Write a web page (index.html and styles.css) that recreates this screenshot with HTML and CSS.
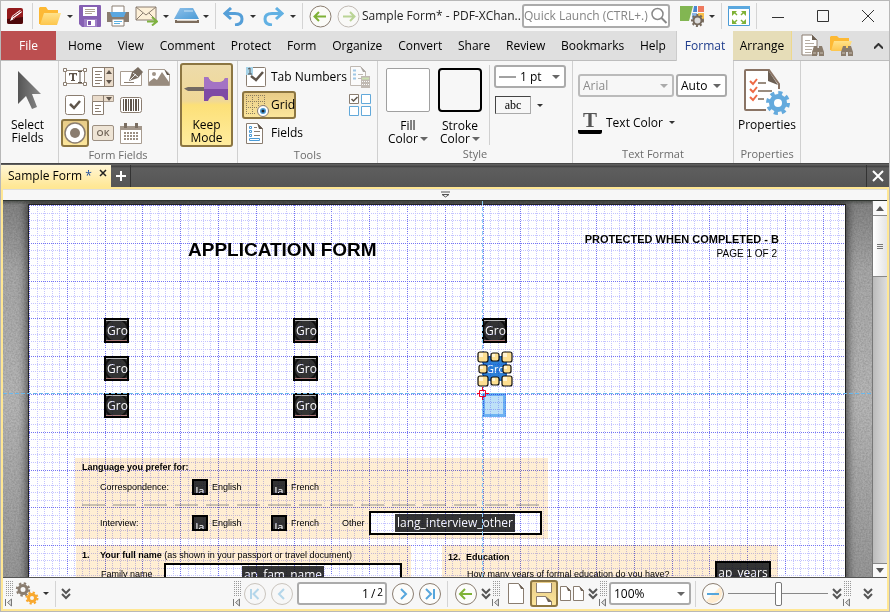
FILE: index.html
```html
<!DOCTYPE html>
<html lang="en">
<head>
<meta charset="utf-8">
<title>Sample Form* - PDF-XChange Editor</title>
<link rel="stylesheet" href="styles.css">
</head>
<body>
<svg class="defs" aria-hidden="true">
  <defs>
    <linearGradient id="gFolder" x1="0" y1="0" x2="0" y2="1"><stop offset="0" stop-color="#ffe28a"/><stop offset="1" stop-color="#fdc64d"/></linearGradient>
    <linearGradient id="gBlue" x1="0" y1="0" x2="1" y2="1"><stop offset="0" stop-color="#8fc1ea"/><stop offset="1" stop-color="#4b9bd6"/></linearGradient>
    <linearGradient id="gGrey" x1="0" y1="0" x2="1" y2="0"><stop offset="0" stop-color="#555"/><stop offset="1" stop-color="#8a8a8a"/></linearGradient>
    <symbol id="binoc" viewBox="0 0 12 11"><path d="M2 1h3v2h2V1h3l2 6v4H7V7H5v4H0V7z" fill="#8a7c6c"/><path d="M1 8h3M8 8h3" stroke="#c9c0b4"/></symbol>
    <symbol id="chev2" viewBox="0 0 10 12"><path d="M1 1l4 4 4-4M1 6l4 4 4-4" fill="none" stroke="#555" stroke-width="2"/></symbol>
    <symbol id="grip" viewBox="0 0 8 26"><path d="M1 .5h7M1 2.500h7M1 4.500h7M1 6.500h7M1 8.500h7M1 10.500h7M1 12.500h7M1 14.500h7" stroke="#999" stroke-dasharray="1 1"/><path d="M.5 18v7M6.500 18v7L2.500 21.500z" stroke="#777" fill="#ddd"/></symbol>
    <g id="gridV">
      <path stroke="#c4c4ff" d="M8.500 0v378M15.500 0v378M23.500 0v378M30.500 0v378M45.500 0v378M53.500 0v378M60.500 0v378M68.500 0v378M83.500 0v378M91.500 0v378M98.500 0v378M106.500 0v378M121.500 0v378M129.500 0v378M136.500 0v378M144.500 0v378M159.500 0v378M166.500 0v378M174.500 0v378M181.500 0v378"/>
      <path stroke="#7474f2" d="M.5 0v378M38.500 0v378M76.500 0v378M113.500 0v378M151.500 0v378"/>
    </g>
    <g id="gridH">
      <path stroke="#c4c4ff" d="M0 8.500h378M0 15.500h378M0 23.500h378M0 30.500h378M0 45.500h378M0 53.500h378M0 60.500h378M0 68.500h378M0 83.500h378M0 91.500h378M0 98.500h378M0 106.500h378M0 121.500h378M0 129.500h378M0 136.500h378M0 144.500h378M0 159.500h378M0 166.500h378M0 174.500h378M0 181.500h378"/>
      <path stroke="#7474f2" d="M0 .5h378M0 38.500h378M0 76.500h378M0 113.500h378M0 151.500h378"/>
    </g>
    <pattern id="grid" width="378" height="378" patternUnits="userSpaceOnUse">
      <g shape-rendering="crispEdges" fill="none" stroke-dasharray="1 1">
        <use href="#gridV"/><use href="#gridV" x="189"/><use href="#gridH"/><use href="#gridH" y="189"/>
      </g>
    </pattern>
    <filter id="noise"><feTurbulence type="fractalNoise" baseFrequency=".6" numOctaves="2" seed="3"/><feColorMatrix values="0 0 0 0 0  0 0 0 0 0  0 0 0 0 0  1 0 0 0 -.3"/></filter>
  </defs>
</svg>
<div class="window">
  <header class="titlebar">
    <button class="logo" aria-label="Application menu"><svg width="16" height="16" viewBox="0 0 16 16"><rect width="16" height="16" rx="2" fill="#931a1c"/><path d="M0 11l16-2v5a2 2 0 0 1-2 2H2a2 2 0 0 1-2-2z" fill="#4d080a"/><path d="M3 13l2-5 8-6 2 2-8 7z" fill="#fff"/><path d="M5.500 9L14 3M6 11l9-6" stroke="#931a1c"/></svg></button>
    <i class="sep"></i>
    <button class="slot" aria-label="Open"><svg width="24" height="20" viewBox="0 0 24 20"><path d="M1 18V2l1-1h6l2 3h10v6L4 18z" fill="#fdb934"/><path d="M6 7h17l-4 12H2z" fill="url(#gFolder)"/></svg></button><button class="dd" aria-label="Open options"></button>
    <button class="slot" aria-label="Save"><svg width="22" height="22" viewBox="0 0 22 22"><path d="M1 0h20a1 1 0 0 1 1 1v20a1 1 0 0 1-1 1H3l-3-3V1a1 1 0 0 1 1-1z" fill="#8660b3"/><path d="M4 2h14v9H4z" fill="#fff"/><path d="M6 4.500h10M6 6.500h10M6 8.500h7" stroke="#b0a494"/><path d="M5 14h13v8H5z" fill="#9f7fc6"/><path d="M8 15h8v6H8z" fill="#fff"/><path d="M9 16h3v4H9z" fill="#7a52a8"/></svg></button>
    <button class="slot" aria-label="Print"><svg width="22" height="22" viewBox="0 0 22 22"><path d="M5 1h12v8H5z" fill="#fff" stroke="#8a7f73"/><path d="M0 7h22v10H0z" fill="#8a7d70"/><path d="M3 7h16l-2 5H5z" fill="#5aa7e0"/><path d="M5 14h12v7H5z" fill="#fff" stroke="#8a7f73"/><path d="M7 16.500h8M7 18.500h6" stroke="#5bb0e0"/></svg></button>
    <button class="slot" aria-label="Email"><svg width="23" height="20" viewBox="0 0 23 20"><path d="M1 1h20v13H1z" fill="#fdf0d8" stroke="#8a7d70"/><path d="M1 1l10 8L21 1M1 14l7-7M21 14l-7-7" fill="none" stroke="#8a7d70"/><path d="M12 15.500h9M17 11l5 4.500-5 4" fill="none" stroke="#7fb241" stroke-width="2"/></svg></button><button class="dd" aria-label="Email options"></button>
    <button class="slot" aria-label="Scan"><svg width="25" height="16" viewBox="0 0 25 16"><path d="M6 0h13l6 11H0z" fill="url(#gBlue)"/><path d="M10 3h9" stroke="#cbe4f6"/><path d="M1 12h24v3H1z" fill="#7c6c5c"/><path d="M3 12h20v1H3z" fill="#d8d2ca"/></svg></button><button class="dd" aria-label="Scan options"></button>
    <i class="sep"></i>
    <button class="slot" aria-label="Undo"><svg width="21" height="19" viewBox="0 0 21 19"><path d="M8 1L2 6.500 8 12M2 6.500h10q7 0 7 5.500t-7 6" fill="none" stroke="#559fd8" stroke-width="3"/></svg></button><button class="dd" aria-label="Undo list"></button>
    <button class="slot" aria-label="Redo"><svg width="21" height="19" viewBox="0 0 21 19"><path d="M13 1l6 5.500L13 12M19 6.500H9q-7 0-7 5.500t7 6" fill="none" stroke="#62b1e3" stroke-width="3"/></svg></button><button class="dd" aria-label="Redo list"></button>
    <i class="sep"></i>
    <button class="slot" aria-label="Previous view"><svg width="23" height="23" viewBox="0 0 23 23"><circle cx="11.500" cy="11.500" r="10.500" fill="#fbfbf8" stroke="#8a7d70"/><path d="M10 7l-4.500 4.500L10 16M5.500 11.500H17" fill="none" stroke="#7fb236" stroke-width="2"/></svg></button>
    <button class="slot faded" aria-label="Next view"><svg width="23" height="23" viewBox="0 0 23 23"><circle cx="11.500" cy="11.500" r="10.500" fill="#fbfbf8" stroke="#8a7d70"/><path d="M13 7l4.500 4.500L13 16M17.500 11.500H6" fill="none" stroke="#7fb236" stroke-width="2"/></svg></button>
    <h1 class="title">Sample Form* - PDF-XChan..</h1>
    <div class="search"><input type="text" aria-label="Quick Launch" placeholder="Quick Launch (CTRL+.)"><svg width="18" height="18" viewBox="0 0 18 18"><circle cx="7.500" cy="7" r="5.500" fill="none" stroke="#888" stroke-width="1.500"/><path d="M11.500 11l5 5" stroke="#888" stroke-width="2"/></svg></div>
    <button class="slot" aria-label="UI options"><svg width="24" height="22" viewBox="0 0 24 22"><path d="M0 1h13L9 16H0z" fill="#82b652"/><path d="M14 1h3v6h-4z" fill="#4a86cf"/><path d="M18 1h6v6h-6z" fill="#ef7a5f"/><path d="M12 8h5v6h-5z" fill="#8bb6e6"/><path d="M18 8h6v6h-6z" fill="#f9c04a"/><circle cx="17.500" cy="15.500" r="4" fill="#ddd" stroke="#766a5d" stroke-width="2"/><circle cx="17.500" cy="15.500" r="5.500" fill="none" stroke="#766a5d" stroke-width="2" stroke-dasharray="2 2"/></svg></button><button class="dd" aria-label="UI options list"></button>
    <i class="sep"></i>
    <button class="slot" aria-label="Full screen"><svg width="22" height="20" viewBox="0 0 22 20"><path d="M.5.5h21v19H.5z" fill="#fff" stroke="#4b9bd6"/><path d="M0 0h22v3H0z" fill="#5ba8df"/><path d="M4 5h5L7.500 6.500l2 2-1 1-2-2L4 10zM18 5h-5l1.500 1.500-2 2 1 1 2-2L18 10zM4 18h5l-1.500-1.500 2-2-1-1-2 2L4 13zM18 18h-5l1.500-1.500-2-2 1-1 2 2L18 13z" fill="#7fb236"/></svg></button>
    <i class="sep"></i>
    <div class="window-buttons">
      <button aria-label="Minimize"><svg width="12" height="12"><path d="M0 7.500h12" stroke="#333"/></svg></button>
      <button aria-label="Maximize"><svg width="12" height="12"><path d="M.5.5h11v11H.5z" fill="none" stroke="#333"/></svg></button>
      <button aria-label="Close"><svg width="12" height="12"><path d="M0 0l12 12M12 0L0 12" stroke="#333"/></svg></button>
    </div>
  </header>

  <nav class="menu">
    <a class="file" href="#file">File</a>
    <div class="menu-items">
      <a href="#home">Home</a><a href="#view">View</a><a href="#comment">Comment</a><a href="#protect">Protect</a><a href="#form">Form</a><a href="#organize">Organize</a><a href="#convert">Convert</a><a href="#share">Share</a><a href="#review">Review</a><a href="#bookmarks">Bookmarks</a><a href="#help">Help</a>
    </div>
    <a class="tab-format" href="#format">Format</a>
    <a class="tab-arrange" href="#arrange">Arrange</a>
    <div class="menu-tools">
      <button aria-label="Find"><svg width="23" height="23" viewBox="0 0 23 23"><path d="M1 1h10l5 5v15H1z" fill="#fff" stroke="#8a7d70"/><path d="M11 1v5h5z" fill="#6c6054"/><path d="M4 6.500h5M4 9.500h9M4 12.500h9M4 15.500h7M4 18.500h6" stroke="#b6ada2"/><use href="#binoc" x="11" y="11" width="12" height="11"/></svg></button>
      <button aria-label="Search folders"><svg width="24" height="23" viewBox="0 0 24 23"><path d="M1 16V3l1-1h6l2 2h10v5L4 17z" fill="#fdb934"/><path d="M5 7h18l-4 10H2z" fill="url(#gFolder)"/><use href="#binoc" x="12" y="11" width="12" height="11"/></svg></button>
      <button class="collapse" aria-label="Collapse ribbon"><svg width="9" height="6"><path d="M0 5.500l4.500-4.500L9 5.500" fill="none" stroke="#333" stroke-width="2"/></svg></button>
    </div>
  </nav>

  <section class="ribbon">
    <div class="group g-select">
      <button class="big"><svg width="28" height="42" viewBox="0 0 28 42"><path d="M4 2l23 23-9 0 5 13-5 2-6-13-8 8z" fill="url(#gGrey)"/></svg><span>Select<br>Fields</span></button>
    </div>
    <div class="group g-fields">
      <div class="field-grid">
        <button aria-label="Text field"><svg width="24" height="18" viewBox="0 0 24 18"><path d="M2.500 2.500h19v13h-19z" fill="#fff" stroke="#9c8f82"/><g fill="#fff" stroke="#8a7d70"><path d="M.5.5h3v3h-3zM20.500.5h3v3h-3zM.5 14.500h3v3h-3zM20.500 14.500h3v3h-3z"/></g><path d="M6 5h8v2.500h-1V6.200h-2V12h1v1H8v-1h1V6.200H7v1.300H6z" fill="#5f554b"/><path d="M15 3.500h4M17 3.500v11M15 14.500h4" stroke="#5f554b"/></svg></button>
        <button aria-label="List box"><svg width="22" height="20" viewBox="0 0 22 20"><path d="M.5.5h21v19H.5z" fill="#fff" stroke="#8a7d70"/><path d="M13 1h8v18h-8z" fill="#eadccb"/><path d="M12.500 0v20" stroke="#8a7d70"/><path d="M3 4.500h7M3 7.500h5M3 10.500h7M3 13.500h7M3 16.500h5" stroke="#8a7d70"/><path d="M14 7l3-4 3 4zM14 13l3 4 3-4z" fill="#5f554b"/></svg></button>
        <button aria-label="Signature field"><svg width="23" height="20" viewBox="0 0 23 20"><path d="M.5 4.500h21v14H.5z" fill="#fff" stroke="#a89c90"/><path d="M4 15.500h10" stroke="#8a7d70"/><path d="M9 14l3-9 6-5 5 5-5 6z" fill="#786c60"/><path d="M13 6l5 4M10 13l6-6" stroke="#eee"/></svg></button>
        <button aria-label="Image field"><svg width="22" height="17" viewBox="0 0 22 17"><path d="M.5.500h16L21.500 5v11.500H.5z" fill="#fff" stroke="#a89c90"/><circle cx="6" cy="5" r="2" fill="#a09488"/><path d="M1 16v-3l5-4 3 2 5-8 7 10v3z" fill="#988b7e"/><path d="M16 0l6 6h-3z" fill="#5f554b"/></svg></button>
        <button aria-label="Check box field"><svg width="20" height="20" viewBox="0 0 20 20"><rect x=".5" y=".5" width="19" height="19" rx="2" fill="#fff" stroke="#8a7d70"/><path d="M5 9l4 4 6-7" fill="none" stroke="#5f554b" stroke-width="2.500"/></svg></button>
        <button aria-label="Drop-down field"><svg width="22" height="20" viewBox="0 0 22 20"><path d="M.5.5h21v6H.5z" fill="#eadccb" stroke="#a89c90"/><path d="M.5 6.500h11v13H.5z" fill="#fff" stroke="#8a7d70"/><path d="M11.500 0v7" stroke="#8a7d70"/><path d="M14 2h6l-3 4z" fill="#5f554b"/><path d="M3 10.500h6M3 13.500h4M3 16.500h6" stroke="#8a7d70"/></svg></button>
        <button aria-label="Barcode field"><svg width="22" height="16" viewBox="0 0 22 16"><rect x=".5" y=".5" width="21" height="15" rx="2" fill="#fff" stroke="#8a7d70"/><path d="M3 2h1v12H3zM5 2h2v12H5zM8 2h1v12H8zM10 2h2v12h-2zM13 2h1v12h-1zM15 2h2v12h-2zM18 2h1v12h-1z" fill="#5f554b"/></svg></button>
        <i></i>
        <button class="active" aria-label="Radio button field"><svg width="22" height="22" viewBox="0 0 22 22"><circle cx="11" cy="11" r="10" fill="#fff" stroke="#8a7d70" stroke-width="1.500"/><circle cx="11" cy="11" r="5" fill="#8a7d70"/></svg></button>
        <button class="okay" aria-label="OK button field">OK</button>
        <button aria-label="Date field"><svg width="22" height="21" viewBox="0 0 22 21"><path d="M.5 3.500h21v17H.5z" fill="#fff" stroke="#a89c90"/><path d="M0 3h22v4H0z" fill="#a3978b"/><path d="M4 0h3v5H4zM15 0h3v5h-3z" fill="#7a6d61"/><path d="M4 10h14M4 13h14M4 16h14" stroke="#9b8f83" stroke-width="2" stroke-dasharray="2 1"/></svg></button>
      </div>
      <h2>Form Fields</h2>
    </div>
    <div class="group g-keep">
      <button class="big keep"><svg width="46" height="26" viewBox="0 0 46 26"><path d="M0 12.500l4-1.500h18v4H4z" fill="#736a62"/><path d="M20 1h4q2 5 6 5h6q4 0 5-4h3v22h-3q-1-4-5-4h-6q-4 0-6 5h-4z" fill="#7f4aa5"/><path d="M20 1h4q2 5 6 5h6q4 0 5-4h3v11H20z" fill="#a473c4"/></svg><span>Keep<br>Mode</span></button>
    </div>
    <div class="group g-tools">
      <div class="tools-body">
        <button class="tool"><svg width="20" height="20" viewBox="0 0 20 20"><rect x=".5" y=".5" width="19" height="19" rx="1" fill="#fff" stroke="#8a7d70"/><path d="M0 0h7v8H0z" fill="#a6d3e8"/><path d="M2 2l2-1v6M2 7h4" fill="none" stroke="#555"/><path d="M5 9l5 4 7-8" fill="none" stroke="#5f554b" stroke-width="2.500"/></svg>Tab Numbers</button>
        <button class="mini faded" aria-label="Calculation order"><svg width="20" height="22" viewBox="0 0 20 22"><path d="M.500.500h10l5 5v14H.5z" fill="#fff" stroke="#8a7d70"/><path d="M10 0l6 6h-3z" fill="#5f554b"/><path d="M3 4.500h3M3 8.500h3M3 12.500h3" stroke="#4b9bd6" stroke-width="2"/><path d="M8 8.500h5M8 12.500h4" stroke="#8a7d70"/><path d="M11 10h9v12h-9z" fill="#8a7d70"/><path d="M12 12.500h7" stroke="#9ec96a" stroke-width="2"/><path d="M12 15.500h7M12 18.500h7" stroke="#fff" stroke-dasharray="1 1"/></svg></button>
        <button class="tool active"><svg width="26" height="23" viewBox="0 0 26 23"><path d="M1 1.500h20M1 7.500h20M1 13.500h12M1 19.500h9M1.500 1v19M7.500 1v19M13.500 1v12M19.500 1v12" stroke="#8a7d60" stroke-dasharray="1 1"/><circle cx="18" cy="17" r="5.500" fill="#fff" stroke="#8a7d70"/><circle cx="18" cy="17" r="3" fill="#4b9bd6"/><circle cx="18" cy="17" r="1.500" fill="#222"/></svg>Grid</button>
        <button class="mini" aria-label="Highlight fields"><svg width="22" height="22" viewBox="0 0 22 22"><path d="M.5.5h9v9h-9z" fill="#fff" stroke="#8a7d70"/><path d="M12.500.5h9v9h-9zM.5 12.500h9v9h-9zM12.500 12.500h9v9h-9z" fill="#fff" stroke="#62a9da"/><path d="M2.500 5l2 2 4-4" fill="none" stroke="#5f554b" stroke-width="1.500"/></svg></button>
        <button class="tool last"><svg width="18" height="21" viewBox="0 0 18 21"><path d="M.500.500h11l5 5v15H.5z" fill="#fff" stroke="#8a7d70"/><path d="M11 0l6 6h-4z" fill="#5f554b"/><path d="M3.500 3.500h2v2h-2zM3.500 7.500h2v2h-2zM3.500 11.500h2v2h-2zM3.500 15.500h10v2h-10z" fill="#fff" stroke="#4b9bd6"/><path d="M8 4.500h3M8 8.500h6M8 12.500h6" stroke="#8a7d70"/></svg>Fields</button>
      </div>
      <h2>Tools</h2>
    </div>
    <div class="group g-style">
      <div class="style-body">
        <button class="swatch"><i></i><span>Fill<br>Color<b class="tri"></b></span></button>
        <button class="swatch stroke"><i></i><span>Stroke<br>Color<b class="tri"></b></span></button>
        <div class="line-style">
          <label class="combo"><svg width="17" height="2"><path d="M0 1h17" stroke="#444"/></svg><select aria-label="Line width"><option>1 pt</option></select></label>
          <div class="row"><button class="abc">abc</button><button class="dd" aria-label="Border style list"></button></div>
        </div>
      </div>
      <h2>Style</h2>
    </div>
    <div class="group g-text">
      <div class="text-body">
        <div class="row">
          <label class="combo font off"><select aria-label="Font" disabled><option>Arial</option></select></label>
          <label class="combo size"><select aria-label="Font size"><option>Auto</option></select></label>
        </div>
        <button class="text-color"><span class="glyph">T</span>Text Color<b class="tri"></b></button>
      </div>
      <h2>Text Format</h2>
    </div>
    <div class="group g-props">
      <button class="big"><svg width="46" height="46" viewBox="0 0 46 46"><path d="M22 41H2q-1 0-1-1V2q0-1 1-1h23l10 14v5" fill="#fff" stroke="#8a7465" stroke-width="2"/><path d="M24 1l10 15-10-4z" fill="#6c5f53"/><path d="M14 14h8M14 22h14M14 30h6" stroke="#9a8d80" stroke-width="2"/><path d="M6 12l3 3 4-5M6 20l3 3 4-5M6 28l3 3 4-5" fill="none" stroke="#ee6a45" stroke-width="2"/><circle cx="34" cy="34" r="6.500" fill="#fff" stroke="#64aadd" stroke-width="5"/><circle cx="34" cy="34" r="10" fill="none" stroke="#64aadd" stroke-width="4" stroke-dasharray="4 3.850"/></svg><span>Properties</span></button>
      <h2>Properties</h2>
    </div>
  </section>

  <div class="tabstrip">
    <div class="doc-tab"><span>Sample Form <em>*</em></span><button aria-label="Close tab"><svg width="8" height="8"><path d="M1 1l6 6M7 1L1 7" stroke="#222" stroke-width="1.500"/></svg></button></div>
    <button class="new-tab" aria-label="New tab"><svg width="10" height="10"><path d="M5 0v10M0 5h10" stroke="#fff" stroke-width="2"/></svg></button>
    <button class="close-all" aria-label="Close document"><svg width="12" height="12"><path d="M1 1l10 10M11 1L1 11" stroke="#fff" stroke-width="2"/></svg></button>
  </div>

  <main class="frame">
    <div class="handle-bar"><svg width="9" height="7"><path d="M0 1h9" stroke="#555"/><path d="M1 3.500h7L4.500 6z" fill="none" stroke="#555"/></svg></div>
    <div class="work">
      <div class="canvas">
        <svg class="texture" width="100%" height="100%"><rect width="100%" height="100%" filter="url(#noise)"/></svg>
        <article class="page">
          <header class="page-head">
            <h3>APPLICATION FORM</h3>
            <div class="page-note"><strong>PROTECTED WHEN COMPLETED - B</strong><span>PAGE 1 OF 2</span></div>
          </header>
          <section class="lang">
            <h4>Language you prefer for:</h4>
            <div class="lang-row"><span class="name">Correspondence:</span><button class="la"><b>la</b></button><span class="opt">English</span><button class="la"><b>la</b></button><span class="opt">French</span></div>
            <div class="dashes"></div>
            <div class="lang-row"><span class="name">Interview:</span><button class="la"><b>la</b></button><span class="opt">English</span><button class="la"><b>la</b></button><span class="opt">French</span><span class="other">Other</span><button class="text-field"><b>lang_interview_other</b></button></div>
          </section>
          <div class="columns">
            <section class="col-name">
              <p><strong class="num">1.</strong><strong>Your full name</strong> (as shown in your passport or travel document)</p>
              <div class="name-row"><span>Family name</span><button class="text-field"><b>ap_fam_name</b></button></div>
            </section>
            <section class="col-edu">
              <p><strong class="num">12.</strong><strong>Education</strong></p>
              <div class="edu-row"><span>How many years of formal education do you have?</span><button class="years">ap_years</button></div>
            </section>
          </div>
          <button class="gro c1 r1">Gro</button><button class="gro c2 r1">Gro</button><button class="gro c3 r1">Gro</button>
          <button class="gro c1 r2">Gro</button><button class="gro c2 r2">Gro</button><button class="gro sel c3 r2">Gro</button>
          <button class="gro c1 r3">Gro</button><button class="gro c2 r3">Gro</button><i class="ghost c3 r3"></i>
          <svg class="grid" width="100%" height="100%"><rect width="100%" height="100%" fill="url(#grid)"/></svg>
        </article>
        <i class="guide-v"></i><i class="guide-h"></i>
        <svg class="handles" width="36" height="50" viewBox="0 0 36 50">
          <g fill="#fddf91" stroke="#111" stroke-width="1.200"><rect x="1" y="1" width="10" height="10" rx="2"/><rect x="25" y="1" width="10" height="10" rx="2"/><rect x="1" y="25" width="10" height="10" rx="2"/><rect x="25" y="25" width="10" height="10" rx="2"/><rect x="14" y="2" width="8" height="8" rx="2"/><rect x="14" y="26" width="8" height="8" rx="2"/><rect x="2" y="14" width="8" height="8" rx="2"/><rect x="26" y="14" width="8" height="8" rx="2"/></g>
          <g fill="#fff3d2"><path d="M2 2h4v4H2zM26 2h4v4h-4zM2 26h4v4H2zM26 26h4v4h-4zM15 3h3v3h-3zM15 27h3v3h-3zM3 15h3v3H3zM27 15h3v3h-3z"/></g>
          <path d="M2.500 39.500h6v6h-6zM5.500 36v3M5.500 46v3M0 42.500h2M9 42.500h3" fill="none" stroke="#f00020"/>
        </svg>
      </div>
      <div class="scrollbar"><button aria-label="Scroll up"><b class="up"></b></button><i class="thumb"></i><button class="down" aria-label="Scroll down"><b class="tri"></b></button></div>
    </div>
    <footer class="status">
      <svg class="grip" width="8" height="26"><use href="#grip"/></svg>
      <button class="slot" aria-label="Options"><svg width="24" height="23" viewBox="0 0 24 23"><g fill="none" stroke="#8a7d70"><circle cx="8" cy="7.500" r="4" stroke-width="3"/><circle cx="8" cy="7.500" r="6.200" stroke-width="2" stroke-dasharray="2.400 2.470"/></g><g fill="none" stroke="#f8a82e"><circle cx="17" cy="16" r="3.500" stroke-width="3"/><circle cx="17" cy="16" r="5.500" stroke-width="2" stroke-dasharray="2.200 2.120"/></g></svg></button><button class="dd" aria-label="Options list"></button>
      <i class="sep"></i>
      <button class="more" aria-label="More"><svg width="10" height="12"><use href="#chev2"/></svg></button>
      <i class="push"></i>
      <svg class="grip" width="8" height="26"><use href="#grip"/></svg>
      <button class="slot" aria-label="First page"><svg class="soft" width="22" height="22" viewBox="0 0 22 22"><circle cx="11" cy="11" r="10.500"/><path d="M7 6v10M14.500 6l-5 5 5 5"/></svg></button>
      <button class="slot" aria-label="Previous page"><svg class="soft" width="22" height="22" viewBox="0 0 22 22"><circle cx="11" cy="11" r="10.500"/><path d="M13 6l-5 5 5 5"/></svg></button>
      <label class="page-no"><input type="text" aria-label="Page number" value="1"><span>/</span><small>2</small></label>
      <button class="slot" aria-label="Next page"><svg class="round" width="22" height="22" viewBox="0 0 22 22"><circle cx="11" cy="11" r="10.500"/><path d="M9 6l5 5-5 5"/></svg></button>
      <button class="slot" aria-label="Last page"><svg class="round" width="22" height="22" viewBox="0 0 22 22"><circle cx="11" cy="11" r="10.500"/><path d="M7 6l5 5-5 5M15 6v10"/></svg></button>
      <i class="sep wide"></i>
      <button class="slot" aria-label="Back"><svg class="round green" width="22" height="22" viewBox="0 0 22 22"><circle cx="11" cy="11" r="10.500"/><path d="M10 6l-5 5 5 5M5 11h12"/></svg></button>
      <button class="more slim" aria-label="More navigation"><svg width="10" height="12"><use href="#chev2"/></svg></button>
      <svg class="grip gap" width="8" height="26"><use href="#grip"/></svg>
      <button class="slot layout" aria-label="Single page"><svg width="17" height="21" viewBox="0 0 17 21"><path d="M.500.500h10l5 5v15H.5z" fill="#fff" stroke="#8a7d70"/><path d="M10 0l6 6h-3z" fill="#6c6054"/></svg></button>
      <button class="slot layout active" aria-label="Continuous"><svg width="17" height="22" viewBox="0 0 17 22"><path d="M.5 0v9.500h15V0M.5 22v-8.500h9l6 5V22" fill="#fff" stroke="#8a7d70"/><path d="M9 13l7 6h-4z" fill="#6c6054"/></svg></button>
      <button class="slot layout" aria-label="Two pages"><svg width="24" height="15" viewBox="0 0 24 15"><path d="M.500.500h6l4 4v10H.5zM13.500.500h6l4 4v10h-10z" fill="#fff" stroke="#8a7d70"/><path d="M6 0l5 5H8zM19 0l5 5h-3z" fill="#6c6054"/></svg></button>
      <button class="more slim" aria-label="More layouts"><svg width="10" height="12"><use href="#chev2"/></svg></button>
      <svg class="grip gap" width="8" height="26"><use href="#grip"/></svg>
      <label class="combo zoom"><select aria-label="Zoom"><option>100%</option></select></label>
      <i class="sep"></i>
      <button class="slot" aria-label="Zoom out"><svg class="round" width="22" height="22" viewBox="0 0 22 22"><circle cx="11" cy="11" r="10.500"/><path d="M18 4a10 10 0 0 1-14 14z" fill="#ffecd0" stroke="none"/><path d="M5 11h12"/></svg></button>
      <input class="slider" type="range" min="0" max="100" value="50" aria-label="Zoom level">
      <button class="more slim" aria-label="More zoom"><svg width="10" height="12"><use href="#chev2"/></svg></button>
      <svg class="grip" width="8" height="26"><use href="#grip"/></svg>
      <button class="more last" aria-label="More toolbars"><svg width="10" height="12"><use href="#chev2"/></svg></button>
    </footer>
  </main>
</div>
</body>
</html>
```
FILE: styles.css
```css
* { box-sizing: border-box; }
html, body { height: 100%; margin: 0; }
body { font: 12px/16px "Open Sans", "Noto Sans", sans-serif; color: #000; background: #f7f7f7; overflow: hidden; }
button, input, select { font: inherit; color: inherit; margin: 0; padding: 0; border: 0; background: none; border-radius: 0; }
button { display: flex; align-items: center; justify-content: center; flex: none; }
a { color: inherit; text-decoration: none; }
h1, h2, h3, h4, p { margin: 0; font-size: inherit; font-weight: normal; }
svg { display: block; flex: none; }
.defs { position: absolute; width: 0; height: 0; }
.window { display: flex; flex-direction: column; height: 100vh; border: 1px solid #b8b8b8; }

.slot { width: 28px; height: 28px; }
.faded { opacity: .5; }
.dd { width: 12px; height: 28px; }
.dd::before, .tri { content: ""; display: inline-block; border: 3px solid transparent; border-top: 3px solid #333; border-bottom: 0; }
.sep { flex: none; width: 7px; height: 26px; background: linear-gradient(#d4d4d4, #d4d4d4) center / 1px 100% no-repeat; }
.row { display: flex; align-items: center; }

/* Title bar */
.titlebar { display: flex; align-items: center; flex: none; height: 30px; background: #f7f7f7; }
.logo { width: 28px; height: 28px; }
.title { flex: 1; min-width: 0; white-space: nowrap; color: #222; }
.search { display: flex; align-items: center; flex: none; width: 148px; height: 24px; margin-right: 8px; border: 2px solid #ababab; border-radius: 3px; background: #fff; }
.search input { flex: 1; min-width: 0; outline: 0; }
.search input::placeholder { color: #858585; opacity: 1; }
.window-buttons { display: flex; justify-content: space-between; flex: none; width: 129px; padding: 0 15px 0 12px; }
.window-buttons button { height: 28px; }

/* Menu */
.menu { display: flex; flex: none; height: 30px; background: #dfdfdf; border-bottom: 1px solid #bdbdbd; line-height: 29px; }
.file { width: 55px; text-align: center; color: #fff; background: #bc4f50; }
.menu-items { flex: 1; display: flex; justify-content: space-between; padding: 0 10px 0 12px; }
.tab-format { width: 57px; margin-bottom: -1px; text-align: center; color: #1e3c8c; background: #f7f7f7; border-left: 1px solid #ccc; }
.tab-arrange { width: 59px; text-align: center; background: #e6ddb8; border-right: 1px solid #eed88c; }
.menu-tools { display: flex; align-items: center; width: 97px; padding-left: 9px; gap: 5px; }
.collapse { width: 14px; margin-left: 13px; }

/* Ribbon */
.ribbon { display: flex; flex: none; height: 102px; background: #f7f7f7; }
.group { display: flex; flex-direction: column; flex: none; border-right: 1px solid #d0d0d0; }
.group h2 { margin-top: auto; padding-bottom: 1px; line-height: 16px; text-align: center; color: #6c6c6c; font-size: 11px; }
.big { flex-direction: column; line-height: 13px; padding-top: 8px; gap: 7px; justify-content: flex-start; }
.g-select { width: 58px; }
.g-select .big { padding-right: 4px; }
.g-fields { width: 119px; }
.field-grid { display: grid; grid-template-columns: repeat(4, 28px); grid-auto-rows: 28px; padding: 2px 0 0 2px; }
.active { border: 2px solid #8c7642; border-radius: 3px; background: linear-gradient(#e8cc88, #fce69b); }
.okay { align-self: center; justify-self: center; width: 22px; height: 16px; border: 1px solid #9c8f82; border-radius: 2px; background: #eee4d5; color: #6e6256; font-size: 9px; font-weight: 600; line-height: 12px; }
.g-keep { width: 60px; }
.keep { width: 53px; height: 84px; margin: 2px 0 0 2px; padding-top: 11px; gap: 16px; border: 2px solid #8c7642; border-radius: 3px; background: linear-gradient(#eddbaa 0, #f0d896 45%, #fce078 50%, #ffec9e 100%); overflow: hidden; }
.g-tools { width: 140px; }
.tools-body { display: grid; grid-template-columns: 101px 34px; grid-auto-rows: 28px; padding: 2px 0 0 4px; }
.tool { justify-content: flex-start; padding-left: 4px; gap: 5px; white-space: nowrap; }
.tool.active { width: 54px; padding-left: 1px; gap: 0; }
.tool.last { gap: 7px; }
.mini { justify-self: center; }
.g-style { width: 195px; }
.style-body { display: flex; padding: 7px 0 0 7px; gap: 6px; }
.swatch { width: 46px; flex-direction: column; justify-content: flex-start; line-height: 13px; gap: 7px; }
.swatch i { width: 44px; height: 44px; background: #fff; border: 1px solid #a0a0a0; border-radius: 2px; }
.swatch.stroke i { border: 2px solid #000; border-radius: 4px; background: #f7f7f7; }
.swatch .tri, .combo::after { border-width: 4px 4px 0; border-top-color: #666; }
.swatch .tri { margin: 0 0 2px 2px; }
.line-style { display: flex; flex-direction: column; gap: 8px; padding-left: 6px; height: 80px; margin-top: -3px; border-left: 1px solid #d0d0d0; }
.combo { position: relative; display: flex; align-items: center; flex: none; width: 72px; height: 23px; padding: 0 3px; border: 2px solid #ababab; border-radius: 3px; background: #fff; }
.combo::after { content: ""; position: absolute; right: 4px; top: 8px; border-style: solid; border-color: #666 transparent transparent; }
.combo select { appearance: none; flex: 1; min-width: 0; outline: 0; opacity: 1; }
.combo svg { margin-right: 4px; }
.line-style .combo { margin-left: -2px; }
.abc { width: 36px; height: 18px; border: 1px solid; border-color: #444 #aaa #aaa #444; font: 12px "Liberation Serif", serif; }
.line-style .row { margin-left: -1px; }
.line-style .dd { width: 17px; height: 18px; }
.g-text { width: 161px; }
.text-body { display: flex; flex-direction: column; gap: 13px; padding: 13px 0 0 5px; }
.text-body .row { gap: 2px; }
.font { width: 96px; }
.size { width: 51px; }
.off { color: #8a8a8a; background: #f7f7f7; border-color: #bbb; }
.off::after { border-top-color: #aaa; }
.text-color { justify-content: flex-start; gap: 4px; height: 25px; }
.text-color .tri { margin-left: 2px; }
.glyph { width: 24px; height: 22px; border-bottom: 4px solid #000; border-radius: 2px; color: #555; font: bold 21px/16px "Liberation Serif", serif; text-align: center; }
.g-props { width: 67px; }
.g-props .big { gap: 3px; }

/* Document tabs */
.tabstrip { display: flex; align-items: flex-end; flex: none; height: 24px; background: linear-gradient(#3d3d3d, #6a6a6a 2px, #3c3c3c 3px, #5e5e5e 5px, #555); }
.doc-tab { display: flex; justify-content: space-between; width: 110px; height: 22px; padding: 0 4px 0 7px; background: linear-gradient(#fff6d6, #ffe794); line-height: 21px; }
.doc-tab em { font-style: normal; color: #1e4fa0; }
.doc-tab button { height: 16px; }
.new-tab { width: 20px; height: 22px; border-right: 1px solid #333; }
.close-all { width: 23px; height: 22px; margin-left: auto; border-left: 1px solid #333; }

/* Work area */
.frame { display: flex; flex-direction: column; flex: 1; min-height: 0; padding: 2px; background: #ffe794; }
.handle-bar { display: flex; justify-content: center; flex: none; height: 11px; padding-top: 1px; background: #f7f7f7; border-top: 1px solid #ddd; }
.work { display: flex; flex: 1; min-height: 0; border-top: 1px solid #2e332e; }
.canvas { position: relative; flex: 1; min-width: 0; overflow: hidden; background: linear-gradient(#585b57 0, #858585 4px, #a9a9a9 70px, #b8b8b8 200px, #999 100%); padding: 3px 26px 0 25px; }
.texture { position: absolute; inset: 0; opacity: .25; }
.page { position: relative; height: 500px; background: #fff; border: 1px solid #222; box-shadow: 0 0 8px 2px rgba(0, 0, 0, .55); font-family: "Liberation Sans", sans-serif; font-size: 9px; line-height: 12px; }
.page-head { display: flex; justify-content: space-between; height: 253px; padding: 27px 66px 0 159px; }
.page-head h3 { font-size: 19px; font-weight: bold; line-height: 36px; }
.page-note { display: flex; flex-direction: column; align-items: flex-end; font-size: 10px; line-height: 16px; }
.page-note strong { font-size: 11px; line-height: 14px; }
.page-note span { padding-right: 2px; }
.lang { width: 473px; height: 81px; margin-left: 46px; padding: 3px 7px 0; background: #ffeed3; }
.lang h4 { font-weight: bold; }
.lang-row { display: flex; align-items: center; height: 28px; padding-left: 18px; }
.lang-row > * { flex: none; }
.name { width: 92px; }
.la { width: 16px; height: 16px; padding: 2px 0 0; overflow: hidden; border: 2px solid #000; background: #333; color: #fff; font: 11px/12px "Noto Sans", sans-serif; }
.la b { font-weight: normal; padding-top: 6px; }
.opt { width: 55px; padding-left: 4px; }
.opt + .la { margin-left: 8px; }
.other { margin-right: 4px; }
.dashes { height: 8px; background: repeating-linear-gradient(90deg, #c9bfae 0 23px, transparent 23px 31px) 0 3px / 100% 2px no-repeat; }
.text-field { border: 2px solid #000; background: #fff; color: #fff; font: 12px/18px "Open Sans", "Noto Sans", sans-serif; }
.text-field b { padding: 0 2px; background: #333; font-weight: normal; }
.lang .text-field { width: 173px; height: 24px; }
.columns { display: flex; gap: 31px; margin: 6px 67px 0 47px; }
.col-name { flex: none; width: 335px; height: 120px; padding: 4px 0 0 6px; background: #ffeed3; }
.col-edu { flex: 1; height: 120px; padding: 6px 7px 0 6px; background: #ffeed3; }
.num { display: inline-block; width: 18px; }
.name-row, .edu-row { display: flex; padding-left: 19px; }
.name-row span { width: 63px; padding-top: 7px; }
.name-row .text-field { width: 238px; height: 24px; margin-top: 2px; }
.edu-row { justify-content: space-between; }
.edu-row span { padding-top: 5px; white-space: nowrap; }
.years { width: 56px; height: 24px; margin-top: -2px; border: 2px solid #000; background: #333; color: #fff; font: 12px/18px "Open Sans", "Noto Sans", sans-serif; }

/* Form controls placed on the sheet */
.gro { position: absolute; width: 25px; height: 25px; padding-left: 2px; border: 2px solid #000; background: radial-gradient(circle, #333 0 10px, #111 11px 12px, #333 13px); box-shadow: inset 0 1px #bbb, inset 0 -1px #a77; color: #fff; font: 12px/16px "Open Sans", "Noto Sans", sans-serif; }
.sel { border-color: #1c6fc4; background: #2c7fd6; box-shadow: none; font-size: 11px; }
.ghost { position: absolute; width: 24px; height: 24px; border: 3px solid #6db2f2; background: #bde0f7; }
.c1 { left: 75px; }
.c2 { left: 264px; }
.c3 { left: 453px; }
.r1 { top: 113px; }
.r2 { top: 151px; }
.r3 { top: 188px; }
.grid { position: absolute; inset: 0; mix-blend-mode: multiply; pointer-events: none; }
.guide-v { position: absolute; left: 479px; top: 0; bottom: 0; width: 1px; background: repeating-linear-gradient(#8ccef5 0 4px, transparent 4px 6px); }
.guide-h { position: absolute; top: 192px; left: 0; right: 0; height: 1px; background: repeating-linear-gradient(90deg, #6ab8ec 0 4px, transparent 4px 6px); }
.handles { position: absolute; left: 474px; top: 150px; }

.scrollbar { display: flex; flex-direction: column; flex: none; width: 15px; border-left: 1px solid #777; background: linear-gradient(90deg, #bbb, #ddd); }
.scrollbar button { height: 14px; background: #f9f9f9; }
.scrollbar .up { border: 4px solid transparent; border-top: 0; border-bottom: 5px solid #555; }
.scrollbar .tri { border-width: 5px 4px 0; border-top-color: #555; }
.scrollbar .down { margin-top: auto; border-top: 1px solid #888; }
.thumb { height: 62px; border: 1px solid #888; border-width: 1px 0; background: repeating-linear-gradient(#777 0 1px, transparent 1px 2px) center / 6px 5px no-repeat, linear-gradient(90deg, #fff, #e4e4e4); }

/* Status bar */
.status { display: flex; align-items: center; flex: none; height: 32px; padding: 0 2px; background: #f7f7f7; border-top: 1px solid #555; }
.status .slot { height: 27px; width: 27px; }
.status .layout { width: 28px; }
.sep.wide { width: 9px; }
.grip.gap { margin-right: 2px; }
.push { flex: 1; }
.more { width: 14px; height: 26px; }
.more.slim { width: 13px; }
.more.last { width: 34px; }
.soft, .round { fill: none; stroke-width: 2; stroke: #56a6dc; }
.soft { stroke: #b4d6ea; }
.soft circle { stroke: #c9c4bd; stroke-width: 1; }
.round circle { stroke: #8a7d70; stroke-width: 1; fill: #fcfcfa; }
.green { stroke: #7fb236; }
.page-no { display: flex; align-items: center; flex: none; width: 90px; height: 23px; margin: 0 2px; padding-right: 2px; border: 2px solid #ababab; border-radius: 3px; background: #fff; }
.page-no input { flex: 1; min-width: 0; text-align: right; outline: 0; }
.page-no span { padding: 0 2px; }
.page-no small { font-size: 10px; line-height: 16px; align-self: flex-start; }
.zoom { width: 82px; margin-right: 1px; }
.slider { appearance: none; flex: none; width: 100px; height: 24px; margin: 0 2px; background: linear-gradient(#888, #888) center / 100% 1px no-repeat; }
.slider::-webkit-slider-thumb { appearance: none; width: 7px; height: 24px; border: 1px solid #777; border-radius: 2px; background: #fff; }
```
